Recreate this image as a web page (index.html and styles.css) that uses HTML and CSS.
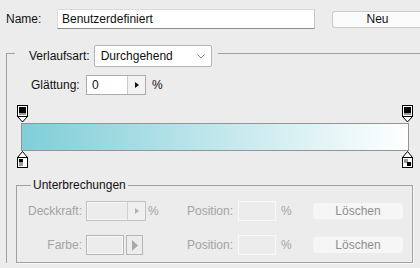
FILE: index.html
```html
<!DOCTYPE html>
<html lang="de">
<head>
    <meta charset="UTF-8">
    <title>Verläufe bearbeiten</title>
    <link rel="stylesheet" href="styles.css">
</head>
<body>
    <div class="top">
        <label class="name-label" for="gradName">Name:</label>
        <input class="name-input" type="text" id="gradName" value="Benutzerdefiniert">
        <button class="btn-new" type="button">Neu</button>
    </div>

    <fieldset class="group">
        <legend class="group-head">
            <span class="head-row">
                <span>Verlaufsart:</span>
                <span class="select">
                    <span>Durchgehend</span>
                    <svg width="8" height="5" viewBox="0 0 8 5"><path d="M0.5 0.5L4 4L7.5 0.5" fill="none" stroke="#8a8a8a"/></svg>
                </span>
            </span>
        </legend>

        <div class="smooth-row">
            <span class="smooth-label">Glättung:</span>
            <span class="spin">
                <input class="spin-value" type="text" value="0">
                <span class="spin-btn"><svg width="4" height="6" viewBox="0 0 4 6"><path d="M0 0L4 3L0 6z" fill="#111"/></svg></span>
            </span>
            <span class="pct">%</span>
        </div>

        <div class="gradient">
            <div class="stops">
                <svg width="11" height="18" viewBox="0 0 11 18">
                    <path d="M0.5 11.5L5.5 17L10.5 11.5z" fill="#fff" stroke="#000"/>
                    <rect x="0.5" y="0.5" width="10" height="11" fill="#fff" stroke="#000"/>
                    <rect x="2" y="2" width="7" height="6" fill="#000"/>
                    <rect x="2" y="8" width="7" height="2" fill="#9a9a9a"/>
                </svg>
                <svg width="11" height="18" viewBox="0 0 11 18">
                    <path d="M0.5 11.5L5.5 17L10.5 11.5z" fill="#fff" stroke="#000"/>
                    <rect x="0.5" y="0.5" width="10" height="11" fill="#fff" stroke="#000"/>
                    <rect x="2" y="2" width="7" height="6" fill="#000"/>
                    <rect x="2" y="8" width="7" height="2" fill="#9a9a9a"/>
                </svg>
            </div>
            <div class="bar"></div>
            <div class="stops">
                <svg width="11" height="17" viewBox="0 0 11 17">
                    <path d="M0.5 6.5L5.5 0.5L10.5 6.5z" fill="#fff" stroke="#000"/>
                    <rect x="0.5" y="6.5" width="10" height="10" fill="#fff" stroke="#000"/>
                    <rect x="2" y="8" width="4" height="3" fill="#000"/>
                    <rect x="2" y="11" width="7" height="4" fill="#9a9a9a"/>
                    <rect x="6" y="11" width="3" height="4" fill="#fff"/>
                </svg>
                <svg width="11" height="17" viewBox="0 0 11 17">
                    <path d="M0.5 6.5L5.5 0.5L10.5 6.5z" fill="#fff" stroke="#000"/>
                    <rect x="0.5" y="6.5" width="10" height="10" fill="#fff" stroke="#000"/>
                    <rect x="2" y="8" width="4" height="4" fill="#9a9a9a"/>
                    <rect x="5" y="11" width="4" height="4" fill="#000"/>
                </svg>
            </div>
        </div>

        <fieldset class="breaks">
            <legend class="breaks-head">Unterbrechungen</legend>
            <div class="breaks-grid">
                <span class="lbl">Deckkraft:</span>
                <span class="spin disabled">
                    <input class="spin-value" type="text" disabled>
                    <span class="spin-btn"><svg width="4" height="6" viewBox="0 0 4 6"><path d="M0 0L4 3L0 6z" fill="#b0b0b0"/></svg></span>
                </span>
                <span class="pct-cell">%</span>
                <span class="lbl2">Position:</span>
                <input class="pos-input" type="text" disabled>
                <span class="pct2">%</span>
                <button class="btn-del" type="button" disabled>Löschen</button>

                <span class="lbl">Farbe:</span>
                <span class="color-pick">
                    <span class="swatch"></span>
                    <span class="swatch-btn"><svg width="6" height="11" viewBox="0 0 6 11"><path d="M0 0L6 5.5L0 11z" fill="#a8a8a8"/></svg></span>
                </span>
                <span></span>
                <span class="lbl2">Position:</span>
                <input class="pos-input" type="text" disabled>
                <span class="pct2">%</span>
                <button class="btn-del" type="button" disabled>Löschen</button>
            </div>
        </fieldset>
    </fieldset>
</body>
</html>
```

FILE: styles.css
```css
body {
    margin: 0;
    width: 420px;
    height: 268px;
    overflow: hidden;
    background: #ececec;
    font-family: "Liberation Sans", Arial, sans-serif;
    font-size: 12px;
    color: #111;
}
.top {
    display: flex;
    align-items: center;
    height: 20px;
    padding: 9px 0 0 6px;
}
.name-label {
    width: 51px;
}
.name-input {
    width: 258px;
    height: 20px;
    box-sizing: border-box;
    margin: 0;
    padding: 0 4px;
    border: 1px solid #dadada;
    border-bottom-color: #8c8c8c;
    border-right-color: #c4c4c4;
    background: #fff;
    font: inherit;
    color: #111;
    outline: none;
}
.btn-new {
    margin-left: 17px;
    width: 88px;
    height: 17px;
    padding: 0 0 0 2px;
    border: 1px solid #cbcbcb;
    border-right: 0;
    border-radius: 3px 0 0 3px;
    background: #fbfbfb;
    font: inherit;
    color: #111;
}
.group {
    margin: 11px 0 0 6px;
    padding: 0;
    width: 414px;
    min-width: 0;
    box-sizing: border-box;
    border: 1px solid #a0a0a0;
    border-right: 0;
    border-bottom: 0;
}
.group-head {
    margin-left: 8px;
    padding: 5px 6px 0 14px;
}
.head-row {
    display: flex;
    align-items: center;
    gap: 4px;
}
.select {
    display: flex;
    align-items: center;
    justify-content: space-between;
    width: 118px;
    height: 22px;
    box-sizing: border-box;
    padding: 0 6px;
    border: 1px solid #b5b5b5;
    border-radius: 2px;
    background: #fff;
}
.smooth-row {
    display: flex;
    align-items: center;
    height: 20px;
    margin-top: 8px;
    padding-left: 24px;
}
.smooth-label {
    width: 55px;
}
.spin {
    display: flex;
    width: 60px;
    height: 20px;
    box-sizing: border-box;
    border: 1px solid #acacac;
    background: #fff;
}
.spin-value {
    width: 40px;
    margin: 0;
    padding: 0 5px;
    box-sizing: border-box;
    border: 0;
    background: transparent;
    font: inherit;
    color: #111;
    outline: none;
}
.spin-btn {
    flex: 1;
    display: flex;
    align-items: center;
    justify-content: center;
    border-left: 1px solid #cacaca;
    background: #f3f3f3;
}
.pct {
    margin-left: 6px;
}
.gradient {
    margin-top: 10px;
}
.stops {
    display: flex;
    justify-content: space-between;
    width: 396px;
    margin-left: 10px;
}
.stops svg {
    display: block;
}
.bar {
    width: 388px;
    height: 28px;
    box-sizing: border-box;
    margin-left: 14px;
    border: 1px solid #959595;
    background: linear-gradient(to right, #80ced8, #ffffff);
}
.breaks {
    margin: 10px 0 0 9px;
    padding: 0 0 7px 0;
    width: 397px;
    min-width: 0;
    box-sizing: border-box;
    border: 1px solid #a0a0a0;
    box-shadow: 1px 1px 0 #fafafa;
}
.breaks-head {
    margin-left: 14px;
    padding: 0 2px;
    line-height: 15px;
}
.breaks-grid {
    display: grid;
    grid-template-columns: 69px 60px 27px 65px 38px 37px 90px;
    grid-template-rows: 20px 20px;
    row-gap: 14px;
    align-items: center;
    margin-top: 8px;
    color: #a3a3a3;
}
.lbl {
    text-align: right;
    padding-right: 4px;
}
.lbl2 {
    text-align: right;
    padding-right: 5px;
}
.pct-cell {
    padding-left: 2px;
}
.pct2 {
    padding-left: 5px;
}
.spin.disabled {
    border-color: #c2c2c2;
    background: #ececec;
    box-shadow: inset 0 0 0 1px #f6f6f6;
}
.spin.disabled .spin-btn {
    border-left-color: #d0d0d0;
    background: #efefef;
}
.pos-input {
    width: 38px;
    height: 20px;
    box-sizing: border-box;
    margin: 0;
    border: 1px solid #f8f8f8;
    background: transparent;
}
.btn-del {
    width: 90px;
    height: 16px;
    padding: 0;
    border: 0;
    border-radius: 3px;
    background: #f6f6f6;
    font: inherit;
    color: #8e8e8e;
}
.color-pick {
    display: flex;
    height: 20px;
}
.swatch {
    width: 38px;
    box-sizing: border-box;
    border: 1px solid #b6b6b6;
    box-shadow: inset 0 0 0 1px #f7f7f7;
}
.swatch-btn {
    display: flex;
    align-items: center;
    justify-content: center;
    width: 17px;
    margin-left: 2px;
    box-sizing: border-box;
    border: 1px solid #b6b6b6;
}
```
